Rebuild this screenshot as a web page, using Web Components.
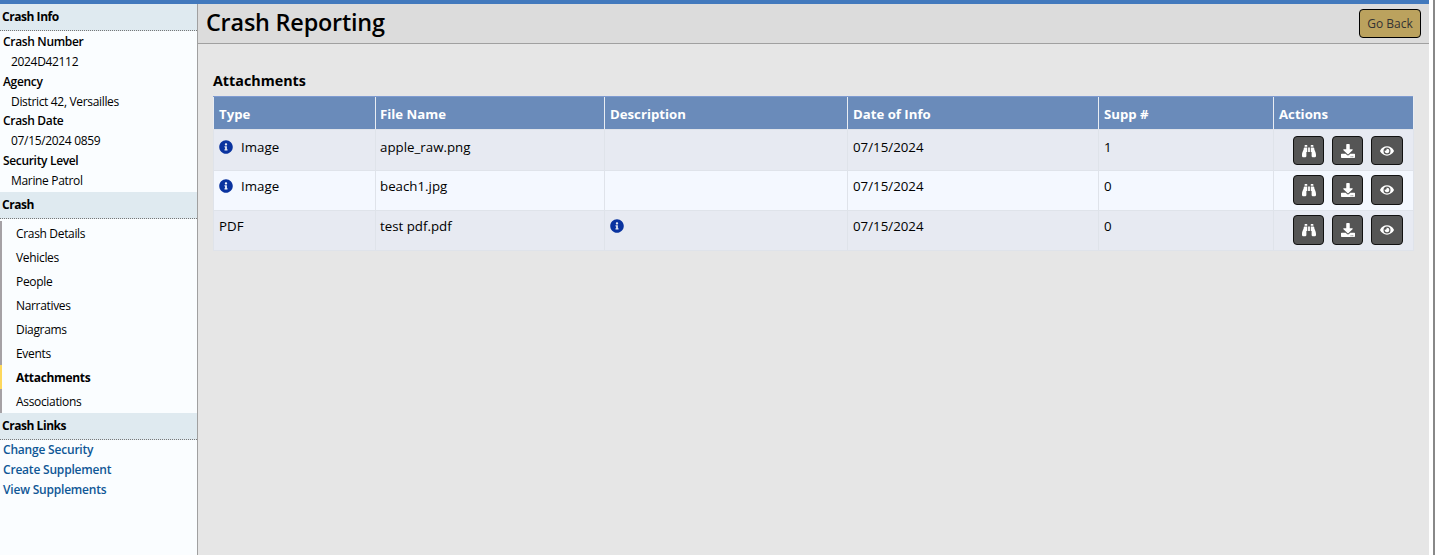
<!DOCTYPE html>
<html>
<head>
<meta charset="utf-8">
<title>Crash Reporting</title>
<style>
  html, body { margin: 0; height: 100%; background: #fff; overflow: hidden; }
  body { display: flex; font-family: "Open Sans", "Liberation Sans", sans-serif; font-size: 12px; color: #000; }
</style>
</head>
<body>
<crash-app>
  <side-nav slot="side"></side-nav>
  <page-header slot="head" title-text="Crash Reporting"></page-header>
  <attachment-table slot="body"></attachment-table>
</crash-app>
<page-edge></page-edge>

<script>
const ICONS = {
  info: ['0 0 512 512', 'M256 8C119.043 8 8 119.083 8 256c0 136.997 111.043 248 248 248s248-111.003 248-248C504 119.083 392.957 8 256 8zm0 110c23.196 0 42 18.804 42 42s-18.804 42-42 42-42-18.804-42-42 18.804-42 42-42zm56 254c0 6.627-5.373 12-12 12h-88c-6.627 0-12-5.373-12-12v-24c0-6.627 5.373-12 12-12h12v-64h-12c-6.627 0-12-5.373-12-12v-24c0-6.627 5.373-12 12-12h64c6.627 0 12 5.373 12 12v100h12c6.627 0 12 5.373 12 12v24z'],
  binoculars: ['0 0 512 512', 'M416 48c0-8.84-7.16-16-16-16h-64c-8.84 0-16 7.16-16 16v48h96V48zM63.91 159.99C61.4 253.84 3.46 274.22 0 404v44c0 17.67 14.33 32 32 32h96c17.67 0 32-14.33 32-32V288h32V128H95.84c-17.63 0-31.45 14.37-31.93 31.99zm384.18 0c-.48-17.62-14.3-31.99-31.93-31.99H320v160h32v160c0 17.67 14.33 32 32 32h96c17.67 0 32-14.33 32-32v-44c-3.46-129.78-61.4-150.16-63.91-244.01zM176 32h-64c-8.84 0-16 7.16-16 16v48h96V48c0-8.84-7.16-16-16-16zm48 256h64V128h-64v160z'],
  download: ['0 0 512 512', 'M216 0h80c13.3 0 24 10.7 24 24v168h87.7c17.8 0 26.7 21.5 14.1 34.1L269.7 378.3c-7.5 7.5-19.8 7.5-27.3 0L90.1 226.1c-12.6-12.6-3.7-34.1 14.1-34.1H192V24c0-13.3 10.7-24 24-24zm296 376v112c0 13.3-10.7 24-24 24H24c-13.3 0-24-10.7-24-24V376c0-13.3 10.7-24 24-24h146.7l49 49c20.1 20.1 52.5 20.1 72.6 0l49-49H488c13.3 0 24 10.7 24 24zm-124 88c0-11-9-20-20-20s-20 9-20 20 9 20 20 20 20-9 20-20zm64 0c0-11-9-20-20-20s-20 9-20 20 9 20 20 20 20-9 20-20z'],
  eye: ['0 0 576 512', 'M572.52 241.4C518.29 135.59 410.93 64 288 64S57.68 135.64 3.48 241.41a32.35 32.35 0 0 0 0 29.19C57.71 376.41 165.07 448 288 448s230.32-71.64 284.52-177.41a32.35 32.35 0 0 0 0-29.19zM288 400a144 144 0 1 1 144-144 143.93 143.93 0 0 1-144 144zm0-240a95.31 95.31 0 0 0-25.31 3.79 47.85 47.85 0 0 1-66.9 66.9A95.78 95.78 0 1 0 288 160z']
};

function iconSvg(name, size) {
  const [box, d] = ICONS[name];
  return `<svg width="${size}" height="${size}" viewBox="${box}" fill="currentColor"><path d="${d}"/></svg>`;
}

const appTemplate = document.createElement('template');
appTemplate.innerHTML = `
  <style>
    :host {
      display: grid;
      grid-template-columns: 197px 1fr;
      grid-template-rows: 40px 1fr;
      flex: none;
      width: 1429px;
      height: 555px;
      box-sizing: border-box;
      border-top: 4px solid #4279bd;
    }
    .side { grid-row: 1 / 3; background: #fafdff; }
    .head { border-left: 1px solid #a0a0a0; }
    .body {
      background: #e6e6e6;
      padding: 26px 15px 0 15px;
      border-left: 1px solid #a0a0a0;
    }
  </style>
  <div class="side"><slot name="side"></slot></div>
  <div class="head"><slot name="head"></slot></div>
  <div class="body"><slot name="body"></slot></div>
`;

class CrashApp extends HTMLElement {
  constructor() {
    super();
    this.attachShadow({ mode: 'open' }).appendChild(appTemplate.content.cloneNode(true));
  }
}
customElements.define('crash-app', CrashApp);

// thin scrollbar strip at the window edge
class PageEdge extends HTMLElement {
  constructor() {
    super();
    this.attachShadow({ mode: 'open' }).innerHTML = `
      <style>
        :host { display: block; flex: none; width: 2px; height: 555px; margin-left: 4px; background: #888; }
      </style>`;
  }
}
customElements.define('page-edge', PageEdge);

const navTemplate = document.createElement('template');
navTemplate.innerHTML = `
  <style>
    :host { display: block; font-size: 12px; letter-spacing: -0.33px; }
    h3 {
      margin: 0;
      height: 26px;
      line-height: 25px;
      padding-left: 2px;
      font-size: 12px;
      font-weight: 700;
      letter-spacing: -0.45px;
      background: #dfeaf0;
      border-bottom: 1px dotted #777;
    }
    dl { margin: 0; padding: 1px 0 0 3px; height: 161px; box-sizing: border-box; }
    dt { font-weight: 600; height: 20px; line-height: 20px; }
    dd { margin: 0 0 0 8px; height: 19.5px; line-height: 19px; }
    ul { list-style: none; margin: 2px 0 0; padding: 0; }
    li {
      height: 24px;
      box-sizing: border-box;
      padding: 0 0 0 14px;
      line-height: 26px;
      border-left: 2px solid #a5a1a5;
    }
    li.on { font-weight: 700; border-left-color: #fdd85d; }
    .links { padding: 0 0 0 3px; }
    .links a {
      display: block;
      height: 20px;
      line-height: 20px;
      color: #0f5796;
      font-weight: 600;
      letter-spacing: -0.2px;
      text-decoration: none;
    }
  </style>
  <h3>Crash Info</h3>
  <dl>
    <dt>Crash Number</dt><dd>2024D42112</dd>
    <dt>Agency</dt><dd>District 42, Versailles</dd>
    <dt>Crash Date</dt><dd>07/15/2024 0859</dd>
    <dt>Security Level</dt><dd>Marine Patrol</dd>
  </dl>
  <h3>Crash</h3>
  <ul>
    <li>Crash Details</li>
    <li>Vehicles</li>
    <li>People</li>
    <li>Narratives</li>
    <li>Diagrams</li>
    <li>Events</li>
    <li class="on">Attachments</li>
    <li>Associations</li>
  </ul>
  <h3>Crash Links</h3>
  <div class="links">
    <a href="#">Change Security</a>
    <a href="#">Create Supplement</a>
    <a href="#">View Supplements</a>
  </div>
`;

class SideNav extends HTMLElement {
  constructor() {
    super();
    this.attachShadow({ mode: 'open' }).appendChild(navTemplate.content.cloneNode(true));
  }
}
customElements.define('side-nav', SideNav);

const headerTemplate = document.createElement('template');
headerTemplate.innerHTML = `
  <style>
    :host {
      display: flex;
      align-items: center;
      justify-content: space-between;
      height: 40px;
      box-sizing: border-box;
      padding: 0 8px 1px 8px;
      background: #dcdcdc;
      border-bottom: 1px solid #a0a0a0;
    }
    h1 { margin: -3px 0 0; font-size: 23.4px; font-weight: 600; color: #000; letter-spacing: -0.2px; }
    button {
      width: 62px;
      height: 29px;
      margin-top: 1px;
      padding: 0;
      font: inherit;
      font-size: 12px;
      color: #333;
      background: #bba25e;
      border: 1px solid #000;
      border-radius: 4px;
    }
  </style>
  <h1></h1>
  <button>Go Back</button>
`;

class PageHeader extends HTMLElement {
  constructor() {
    super();
    this.attachShadow({ mode: 'open' }).appendChild(headerTemplate.content.cloneNode(true));
  }
  connectedCallback() {
    this.shadowRoot.querySelector('h1').textContent = this.getAttribute('title-text');
  }
}
customElements.define('page-header', PageHeader);

const tableTemplate = document.createElement('template');
tableTemplate.innerHTML = `
  <style>
    :host { display: block; width: 1200px; }
    h2 { margin: 0; height: 26px; line-height: 22px; font-size: 14.3px; font-weight: 700; }
    .wrap { border-top: 1px solid #7f9bd0; }
    table { border-collapse: collapse; table-layout: fixed; width: 100%; font-size: 13.3px; }
    th, td { padding: 0 0 0 5px; text-align: left; border: 1px solid #dfe3ea; border-top: 0; }
    th:nth-child(2), td:nth-child(2) { padding-left: 4px; }
    th {
      height: 31px;
      padding-top: 1px;
      background: #6a8bba;
      color: #fff;
      font-weight: 700;
      font-size: 13.2px;
      border-color: #e9edf3;
      border-bottom: 1px solid #dfe3ea;
    }
    td { height: 40px; vertical-align: top; padding-top: 5px; box-sizing: border-box; line-height: 20px; }
    tr:first-child td { height: 41px; padding-top: 7px; }
    tr:nth-child(odd) td { background: #e7eaf2; }
    tr:nth-child(even) td { background: #f4f8ff; }
    .i { color: #0a339f; display: inline-flex; vertical-align: -2px; margin-right: 8px; }
    td.acts { padding: 4px 10px 0 0; }
    tr:first-child td.acts { padding-top: 6px; --btn-h: 29px; }
    .btns { display: flex; justify-content: flex-end; gap: 8px; }
    action-button:last-child { --btn-w: 32px; }
  </style>
  <h2>Attachments</h2>
  <div class="wrap">
    <table>
      <colgroup>
        <col style="width:162px"><col style="width:229px"><col style="width:243px">
        <col style="width:251px"><col style="width:175px"><col style="width:140px">
      </colgroup>
      <thead>
        <tr><th>Type</th><th>File Name</th><th>Description</th><th>Date of Info</th><th>Supp #</th><th>Actions</th></tr>
      </thead>
      <tbody></tbody>
    </table>
  </div>
`;

const ROWS = [
  { type: 'Image', typeInfo: true, file: 'apple_raw.png', descInfo: false, date: '07/15/2024', supp: '1' },
  { type: 'Image', typeInfo: true, file: 'beach1.jpg', descInfo: false, date: '07/15/2024', supp: '0' },
  { type: 'PDF', typeInfo: false, file: 'test pdf.pdf', descInfo: true, date: '07/15/2024', supp: '0' }
];

class AttachmentTable extends HTMLElement {
  constructor() {
    super();
    const root = this.attachShadow({ mode: 'open' });
    root.appendChild(tableTemplate.content.cloneNode(true));
    const info = `<span class="i">${iconSvg('info', 14)}</span>`;
    root.querySelector('tbody').innerHTML = ROWS.map(r => `
      <tr>
        <td>${r.typeInfo ? info : ''}${r.type}</td>
        <td>${r.file}</td>
        <td>${r.descInfo ? info : ''}</td>
        <td>${r.date}</td>
        <td>${r.supp}</td>
        <td class="acts"><div class="btns">
          <action-button icon="binoculars"></action-button>
          <action-button icon="download"></action-button>
          <action-button icon="eye"></action-button>
        </div></td>
      </tr>`).join('');
  }
}

class ActionButton extends HTMLElement {
  constructor() {
    super();
    this.attachShadow({ mode: 'open' }).innerHTML = `
      <style>
        :host { display: block; }
        button {
          display: flex;
          align-items: center;
          justify-content: center;
          width: var(--btn-w, 31px);
          height: var(--btn-h, 30px);
          padding: 0;
          color: #fff;
          background: #555;
          border: 1px solid #111;
          border-radius: 4px;
        }
      </style>
      <button>${iconSvg(this.getAttribute('icon') || 'eye', 14)}</button>`;
  }
}
customElements.define('action-button', ActionButton);
customElements.define('attachment-table', AttachmentTable);
</script>
</body>
</html>
